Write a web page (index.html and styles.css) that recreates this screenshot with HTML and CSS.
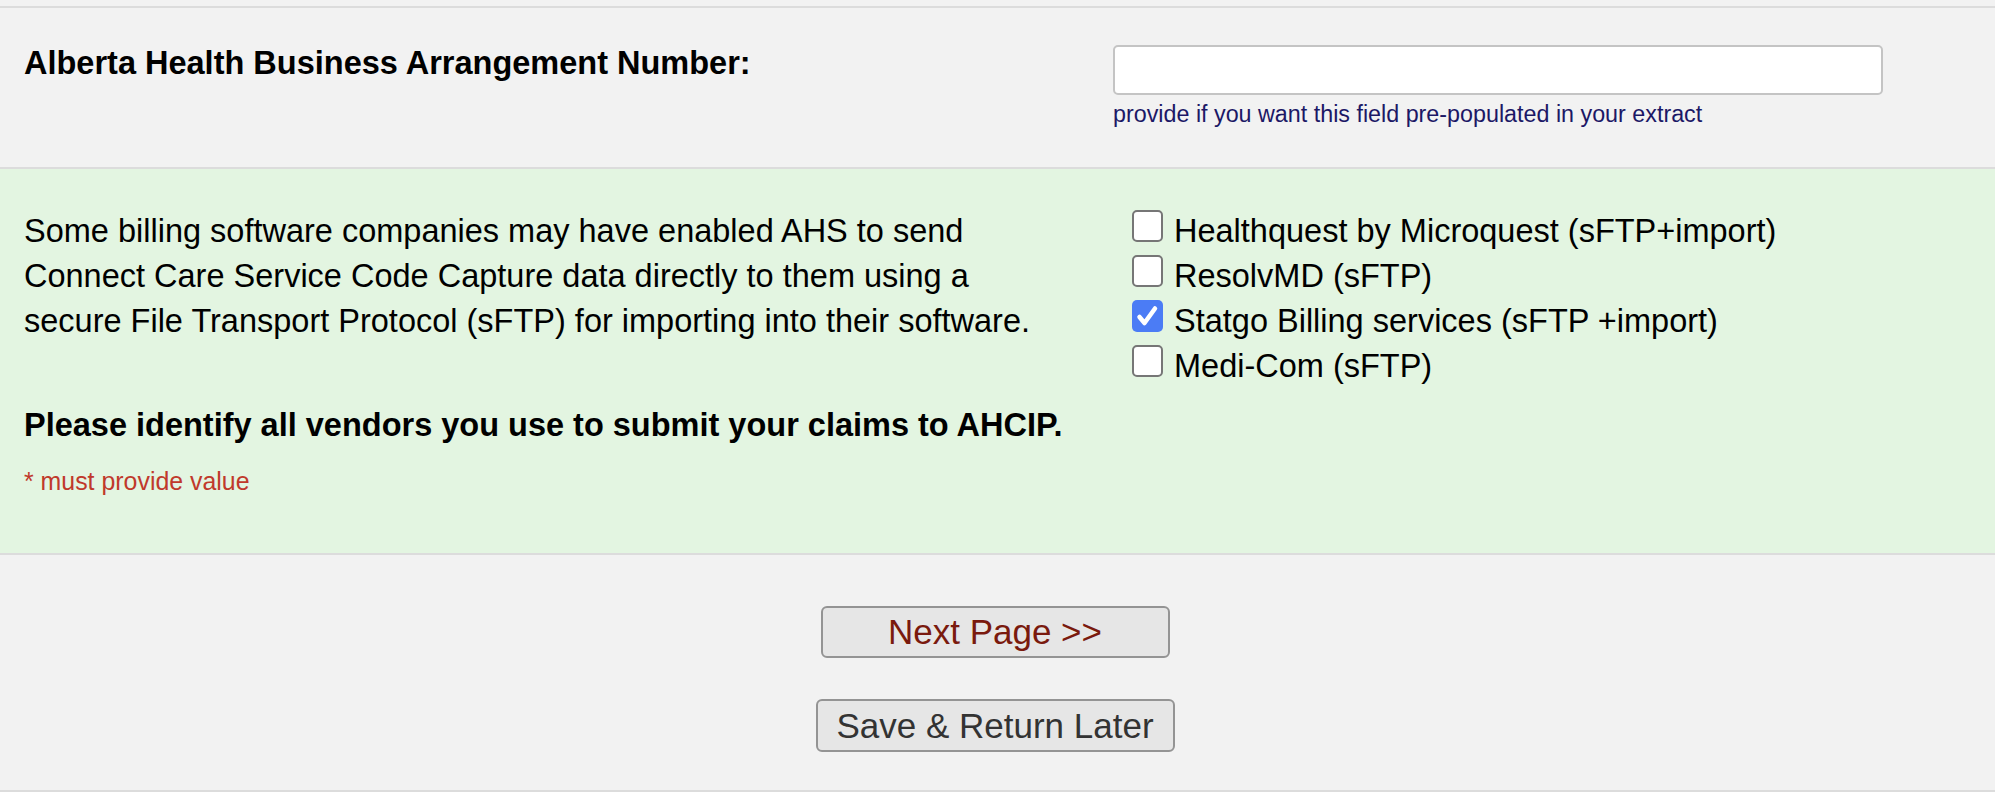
FILE: index.html
```html
<!DOCTYPE html>
<html lang="en">
<head>
<meta charset="utf-8">
<title>Billing vendors</title>
<link rel="stylesheet" href="styles.css">
</head>
<body>
<div class="topgap"></div>
<section class="row row-ba">
  <div class="col-left">
    <label class="q-bold q-ba" for="ba">Alberta Health Business Arrangement Number:</label>
  </div>
  <div class="col-right">
    <input class="text-input" id="ba" type="text">
    <div class="hint">provide if you want this field pre-populated in your extract</div>
  </div>
</section>
<section class="row row-vendors">
  <div class="col-left">
    <p class="para">Some billing software companies may have enabled AHS to send Connect Care Service Code Capture data directly to them using a secure File Transport Protocol (sFTP) for importing into their software.</p>
    <p class="q-bold q-vendors">Please identify all vendors you use to submit your claims to AHCIP.</p>
    <div class="required">* must provide value</div>
  </div>
  <div class="col-right">
    <ul class="choices">
      <li class="choice"><span class="cb"></span><span class="choice-label">Healthquest by Microquest (sFTP+import)</span></li>
      <li class="choice"><span class="cb"></span><span class="choice-label">ResolvMD (sFTP)</span></li>
      <li class="choice"><span class="cb cb-checked"><svg viewBox="0 0 31 32" width="31" height="32"><path d="M7.5 17 L12.5 23 L23 8.5" fill="none" stroke="#fff" stroke-width="4.5" stroke-linecap="round" stroke-linejoin="round"/></svg></span><span class="choice-label">Statgo Billing services (sFTP +import)</span></li>
      <li class="choice"><span class="cb"></span><span class="choice-label">Medi-Com (sFTP)</span></li>
    </ul>
  </div>
</section>
<section class="actions">
  <button class="btn btn-next" type="button">Next Page &gt;&gt;</button>
  <button class="btn btn-save" type="button">Save &amp; Return Later</button>
</section>
<div class="footer-line"></div>
</body>
</html>
```
FILE: styles.css
```css
html, body {
  margin: 0;
  padding: 0;
}
body {
  background: #f2f2f2;
  font-family: "Liberation Sans", Arial, sans-serif;
  color: #000;
}
.topgap {
  height: 6px;
}
.row {
  display: grid;
  grid-template-columns: 1089px 1fr;
  padding: 0 24px;
  border-top: 2px solid #dcdcdc;
}
.row-ba {
  padding-top: 35px;
  height: 124px;
}
.q-bold {
  display: block;
  font-size: 32.5px;
  font-weight: bold;
  line-height: 37px;
  margin: 0;
}
.q-ba {
  padding-top: 2px;
}
.col-right .text-input {
  display: block;
  box-sizing: border-box;
  width: 770px;
  height: 50px;
  margin-top: 2px;
  border: 2px solid #c4c4c4;
  border-radius: 5px;
  background: #fff;
  font-size: 24px;
  padding: 0 8px;
}
.hint {
  margin-top: 6px;
  font-size: 23.3px;
  line-height: 26px;
  color: #1c1866;
}
.row-vendors {
  background: #e3f5e1;
  padding-top: 40px;
  height: 344px;
}
.para {
  margin: 0;
  font-size: 32.5px;
  line-height: 45px;
  width: 1020px;
}
.q-vendors {
  margin-top: 59px;
  line-height: 45px;
}
.required {
  margin-top: 19px;
  font-size: 24.9px;
  line-height: 28px;
  color: #c0392b;
}
.choices {
  list-style: none;
  margin: 0;
  padding: 0 0 0 19px;
}
.choice {
  display: flex;
  align-items: flex-start;
  gap: 11px;
  font-size: 32.5px;
  line-height: 45px;
}
.cb {
  box-sizing: border-box;
  flex: none;
  width: 31px;
  height: 32px;
  margin-top: 1px;
  border: 2px solid #767676;
  border-radius: 5px;
  background: #fff;
}
.cb-checked {
  background: #4b7cf5;
  border: none;
}
.cb-checked svg {
  display: block;
  width: 31px;
  height: 32px;
}
.actions {
  border-top: 2px solid #dcdcdc;
  display: flex;
  flex-direction: column;
  align-items: center;
  padding: 51px 5px 0 0;
  gap: 41px;
  height: 184px;
}
.btn {
  box-sizing: border-box;
  height: 52px;
  font-family: "Liberation Sans", Arial, sans-serif;
  font-size: 35px;
  background: #e6e6e6;
  border: 2px solid #949494;
  border-radius: 6px;
  padding: 0;
  cursor: pointer;
}
.btn-next {
  width: 349px;
  color: #7a1a0e;
}
.btn-save {
  width: 359px;
  height: 53px;
  color: #333;
}
.footer-line {
  border-top: 2px solid #dcdcdc;
}
```
